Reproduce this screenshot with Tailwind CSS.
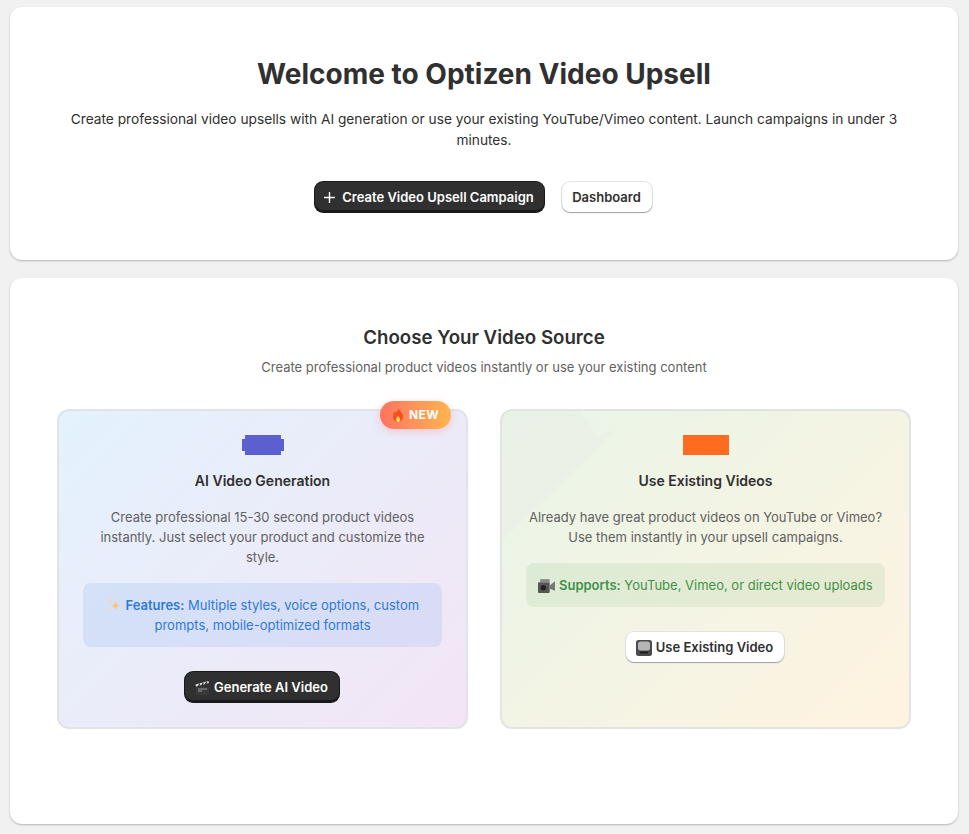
<!DOCTYPE html>
<html lang="en">
<head>
<meta charset="UTF-8" />
<meta name="viewport" content="width=device-width, initial-scale=1.0"/>
<title>Optizen Video Upsell</title>
<script src="https://cdn.jsdelivr.net/npm/@tailwindcss/browser@4"></script>
</head>
<body class="bg-[#f1f1f1] font-['Inter',sans-serif] text-[#303030] h-[834px] overflow-hidden">
  <div class="pl-[10px] pr-[11px] pt-[7px] flex flex-col gap-[18px]">

    <!-- welcome -->
    <section class="bg-white rounded-xl h-[253px] shadow-[0_1px_2px_rgba(0,0,0,0.25)] flex flex-col items-center pt-[47px] px-12">
      <h1 class="text-[28px] leading-[40px] font-bold">Welcome to Optizen Video Upsell</h1>
      <p class="mt-[15px] text-[13.72px] leading-[21px] text-center text-[#303030]">Create professional video upsells with AI generation or use your existing YouTube/Vimeo content. Launch campaigns in under 3 minutes.</p>
      <div class="mt-[31px] mr-[2px] flex gap-[18px]">
        <button class="h-[30px] w-[229px] pt-px rounded-lg bg-[#303030] text-white text-[13px] font-semibold flex items-center justify-center gap-[7px] shadow-[inset_0_-2px_0_#1a1a1a,0_0_0_1px_#1a1a1a]">
          <svg class="w-[11px] h-[11px]" viewBox="0 0 11 11"><path d="M5.5 .5v10M.5 5.5h10" stroke="#fff" stroke-width="1.4" stroke-linecap="round"/></svg>
          Create Video Upsell Campaign
        </button>
        <button class="h-[30px] w-[90px] pt-px rounded-lg bg-white text-[13px] font-semibold shadow-[0_1px_1px_rgba(0,0,0,0.3),0_0_0_1px_#e3e3e3]">Dashboard</button>
      </div>
    </section>

    <!-- sources -->
    <section class="bg-white rounded-xl h-[546px] shadow-[0_1px_2px_rgba(0,0,0,0.25)] pt-[47px] px-[47px]">
      <h2 class="text-[18.7px] leading-[26px] font-semibold text-center">Choose Your Video Source</h2>
      <p class="mt-[6px] text-[13px] leading-5 text-center text-[#616161]">Create professional product videos instantly or use your existing content</p>

      <div class="mt-[32px] grid grid-cols-2 gap-8">
        <!-- ai -->
        <div class="relative h-[320px] rounded-xl border-2 border-[#e1e3e5] bg-linear-[135deg,#e3f2fd,#f3e5f5] px-6 pt-6 flex flex-col items-center">
          <div class="absolute -top-[10px] right-[15px] w-[71px] h-[28px] rounded-[14px] bg-linear-to-r from-[#ff7260] to-[#ffb44e] shadow-[0_2px_8px_rgba(255,107,107,0.3)] flex items-center justify-center gap-[5px] text-white text-xs font-bold tracking-[0.3px]">
            <svg class="w-[12px] h-[14px]" viewBox="0 0 12 14"><path d="M6.3 0C6.8 2.4 4.9 3.6 3.6 4.7 3.5 4 3.2 3.5 2.7 3.1 2.6 5 1 6 1 8.6 1 11.8 3.2 14 6 14s5-2.2 5-5.2C11 5 7.9 3.6 6.3 0Z" fill="#f4511e"/><path d="M6 7.5C5.6 9 4 9.6 4 11.4 4 12.9 5 14 6 14s2.2-1 2.2-2.6C8.2 9.7 6.6 9.1 6 7.5Z" fill="#ffc93c"/><circle cx="6" cy="12.4" r="1" fill="#fff3c4"/></svg>
            NEW
          </div>
          <svg class="w-[42px] h-5 shrink-0" viewBox="0 0 42 20"><path d="M3 0h36v4h3v12h-3v4H3v-4H0V4h3Z" fill="#5c5fd0"/></svg>
          <h3 class="mt-[16px] text-sm leading-5 font-semibold">AI Video Generation</h3>
          <p class="mt-[16px] text-[13px] leading-5 text-center text-[#616161]">Create professional 15-30 second product videos instantly. Just select your product and customize the style.</p>
          <div class="mt-4 w-full rounded-lg bg-[#1a73e8]/10 px-3 py-3 text-[13px] leading-5 text-center text-[#2e7ad8]">
            <svg class="inline-block w-[15px] h-[15px] align-[-3px] mr-[1px]" viewBox="0 0 14 14"><path d="M9 2.5C9.5 5.5 10.5 6.5 13.5 7 10.5 7.5 9.5 8.5 9 11.5 8.5 8.5 7.5 7.5 4.5 7 7.5 6.5 8.5 5.5 9 2.5Z" fill="#ffc46b"/><path d="M3.5 0C3.8 1.6 4.4 2.2 6 2.5 4.4 2.8 3.8 3.4 3.5 5 3.2 3.4 2.6 2.8 1 2.5 2.6 2.2 3.2 1.6 3.5 0ZM3 9.5C3.2 10.7 3.5 11 4.7 11.2 3.5 11.4 3.2 11.7 3 13 2.8 11.7 2.5 11.4 1.3 11.2 2.5 11 2.8 10.7 3 9.5Z" fill="#ffd595"/></svg>
            <strong class="font-semibold">Features:</strong> Multiple styles, voice options, custom prompts, mobile-optimized formats
          </div>
          <button class="mt-[25px] mr-[2px] h-[30px] w-[154px] pt-px rounded-lg bg-[#303030] text-white text-[13px] font-semibold flex items-center justify-center gap-1 shadow-[inset_0_-2px_0_#1a1a1a,0_0_0_1px_#1a1a1a]">
            <svg class="w-[15px] h-[14px]" viewBox="0 0 15 14"><rect x="1" y="6" width="13" height="8" rx="1" fill="#3a3a3a"/><path d="M1 5.5 14 2 13.4 0 .5 3.5Z" fill="#e6e6e6"/><path d="M3.5 5 4.8 2.8M7 4 8.3 1.8M10.5 3.1 11.8 .9" stroke="#222" stroke-width="1.2"/><path d="M3 8h9M3 10h4" stroke="#999" stroke-width="1"/></svg>
            Generate AI Video
          </button>
        </div>

        <!-- existing -->
        <div class="relative h-[320px] rounded-xl border-2 border-[#e1e3e5] bg-linear-[135deg,#e8f5e8,#fff3e0] px-6 pt-6 flex flex-col items-center">
          <!-- dithered corner -->
          <div class="absolute top-0 left-0 w-[114px] h-[131px] rounded-tl-[10px] bg-[repeating-conic-gradient(#e9ede6_0_25%,transparent_0_50%)] bg-size-[2px_2px] [clip-path:polygon(0_0,78px_0,95px_25px,113px_19px,0_130px)]"></div>
          <div class="relative w-[46px] h-5 shrink-0 bg-[#ff6b1f]"></div>
          <h3 class="relative mt-[16px] text-sm leading-5 font-semibold">Use Existing Videos</h3>
          <p class="relative mt-[16px] text-[13px] leading-5 text-center text-[#616161]">Already have great product videos on YouTube or Vimeo? Use them instantly in your upsell campaigns.</p>
          <div class="mt-4 w-full rounded-lg bg-[#4a9a4e]/10 px-2 py-3 text-[13px] leading-5 text-center text-[#43914a]">
            <svg class="inline-block w-[17px] h-[15px] align-[-3px]" viewBox="0 0 16 14"><rect x="0" y="4" width="11" height="10" rx="1" fill="#555"/><path d="M11 7l5-4v9l-5-2Z" fill="#777"/><rect x="2" y="1" width="9" height="3" fill="#8a8a8a"/><circle cx="5" cy="9" r="2.5" fill="#222"/></svg>
            <strong class="font-semibold">Supports:</strong> YouTube, Vimeo, or direct video uploads
          </div>
          <button class="mt-[25px] mr-[2px] h-[30px] w-[158px] pt-px rounded-lg bg-white text-[13px] font-semibold flex items-center justify-center gap-1 shadow-[0_1px_1px_rgba(0,0,0,0.3),0_0_0_1px_#e3e3e3]">
            <svg class="w-[16px] h-[16px]" viewBox="0 0 16 16"><rect x="0" y="0" width="16" height="16" rx="2.5" fill="#4a4a4a"/><rect x="2" y="1.5" width="12" height="9" rx="2.5" fill="#b5b5b5"/><rect x="4" y="11.5" width="8" height="2" fill="#1f1f1f"/></svg>
            Use Existing Video
          </button>
        </div>
      </div>
    </section>
  </div>
</body>
</html>
